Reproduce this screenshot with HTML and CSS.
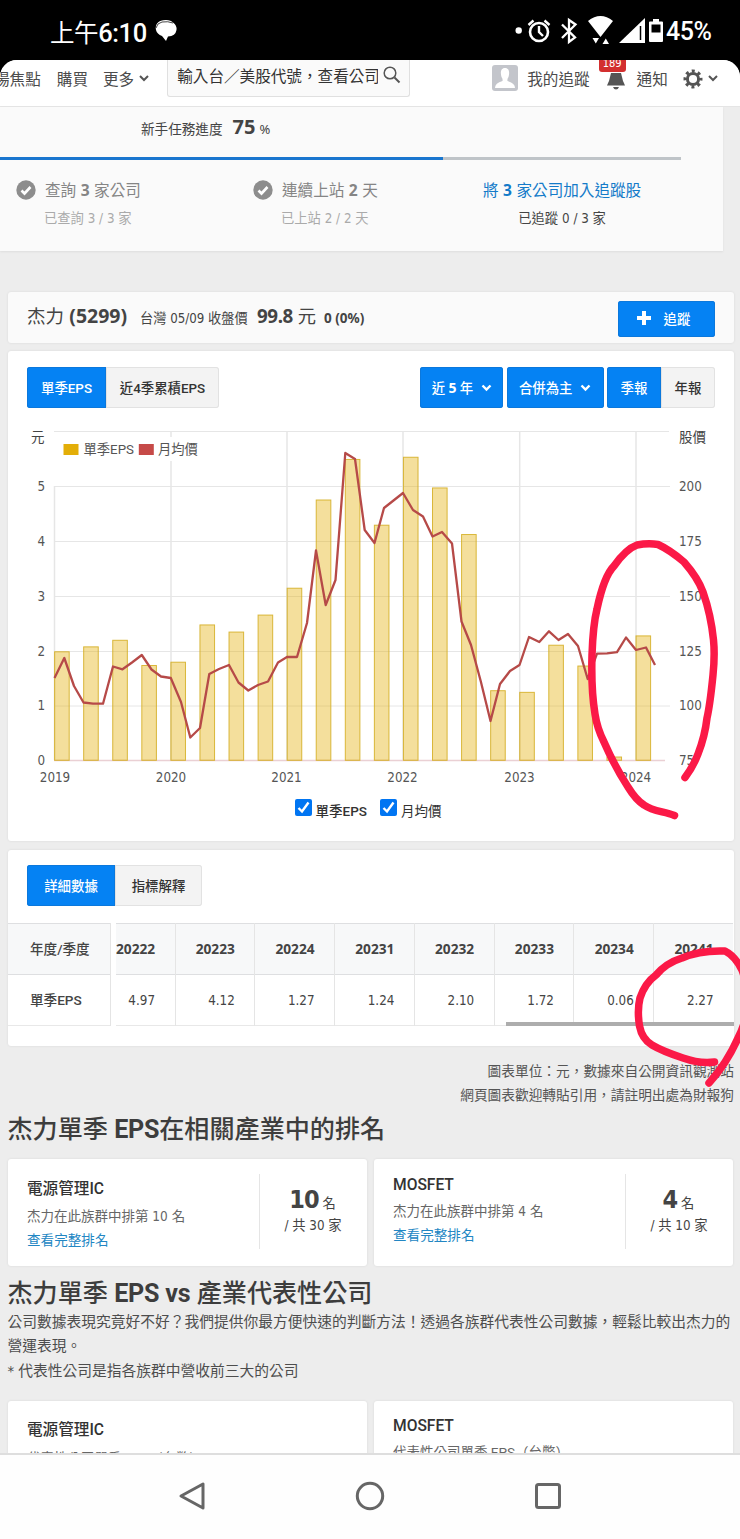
FILE: index.html
```
<!DOCTYPE html>
<html lang="zh-Hant">
<head>
<meta charset="utf-8">
<title>杰力 (5299) 單季EPS</title>
<link rel="stylesheet" href="styles.css">
</head>
<body>
<div class="phone">
  <header class="status">
    <span class="clock">上午<b>6:10</b></span>
    <svg class="chat" width="24" height="24" viewBox="0 0 24 24"><path fill="#fff" d="M4 3.500Q6 1 12 1Q17 1 19 3.500Q23 6 22.500 11Q21.500 17 14 17.500L12 22L8 17Q3 15 2 11Q1 6 4 3.500Z"/><path fill="none" stroke="#444" stroke-width="1" d="M2 9Q3 4 8 3Q14 2 19 4"/></svg>
    <svg class="signals" width="154" height="34" viewBox="512 14 154 34" fill="none" stroke="#fff">
      <circle cx="518.700" cy="29.500" r="3.200" fill="#fff" stroke="none"/>
      <circle cx="539" cy="31" r="9" stroke-width="2.600"/><path stroke-width="2.400" d="M539 25v6l4 4M528.500 24l5-4.500M549.500 24l-5-4.500"/>
      <path stroke-width="2.300" d="M562 23.500l13 13L569 41V19l6.500 4.500L562 37"/>
      <path fill="#fff" stroke="none" d="M588 20Q600.500 10 613 20L600.500 36Z M592.500 37h6.500l-3.200 5.500z M602.500 43h6.500l-3.200-5.500z"/>
      <path fill="#fff" stroke="none" d="M619 42L645 17V42Z"/><path stroke="#000" stroke-width="1.500" d="M640.500 25V39"/>
      <path fill="#fff" stroke="none" fill-rule="evenodd" d="M653 18h6v2.500h3q1 0 1 1V40q0 1-1 1h-12q-1 0-1-1V21.500q0-1 1-1h3z M651.500 23.500v8h9v-8z"/>
    </svg>
    <span class="pct">45%</span>
  </header>

  <main class="page">
    <nav class="nav">
      <span class="link focus">場焦點</span><span class="link buy">購買</span><span class="link">更多</span>
      <svg class="chev" width="10" height="7" viewBox="0 0 10 7"><path d="M1 1l4 4 4-4"/></svg>
      <div class="search"><span>輸入台／美股代號，查看公司</span>
        <svg width="18" height="18" viewBox="0 0 18 18" fill="none" stroke="#555" stroke-width="1.500"><circle cx="7" cy="7" r="5.800"/><path stroke-width="2" d="M11.500 11.500L16.500 16.500"/></svg></div>
      <svg class="avatar" width="26" height="26" viewBox="0 0 26 26"><rect width="26" height="26" rx="3" fill="#c3c5cb"/><path fill="#fff" d="M13 3C8 3 8.500 9 9.500 12Q11 14 10.500 16Q3 18 3 23H23Q23 18 15.500 16Q15 14 16.500 12C17.500 9 18 3 13 3Z"/></svg>
      <span class="link mine">我的追蹤</span>
      <span class="bell"><svg width="20" height="18" viewBox="0 0 20 18"><path fill="#555" d="M5 1H15L17 9Q18 11 19 13.500H1Q2 11 3 9ZM7 15h6q-1 2.500-3 2.500t-3-2.500z"/></svg><b class="badge">189</b></span>
      <span class="link">通知</span>
      <svg class="gear" width="20" height="20" viewBox="-10 -10 20 20" stroke="#555" fill="none"><circle r="5.600" stroke-width="3"/><circle r="8" stroke-width="3" stroke-dasharray="3 3.283" stroke-dashoffset="1.500"/></svg>
      <svg class="chev last" width="10" height="7" viewBox="0 0 10 7"><path d="M1 1l4 4 4-4"/></svg>
    </nav>

    <section class="tasks">
      <div class="progress-label"><span>新手任務進度</span><b>75</b><small>%</small></div>
      <div class="track"><div class="fill"></div></div>
      <div class="steps">
        <div class="step s1"><svg width="20" height="20" viewBox="0 0 20 20"><circle cx="10" cy="10" r="9.700" fill="#8d8d8d"/><path d="M5.500 10.500l3 3 6-6.500" fill="none" stroke="#fff" stroke-width="2.600"/></svg><div><h4>查詢 <b>3</b> 家公司</h4><p>已查詢 3 / 3 家</p></div></div>
        <div class="step s2"><svg width="20" height="20" viewBox="0 0 20 20"><circle cx="10" cy="10" r="9.700" fill="#8d8d8d"/><path d="M5.500 10.500l3 3 6-6.500" fill="none" stroke="#fff" stroke-width="2.600"/></svg><div><h4>連續上站 <b>2</b> 天</h4><p>已上站 2 / 2 天</p></div></div>
        <div class="step s3"><div><h4>將 <b>3</b> 家公司加入追蹤股</h4><p>已追蹤 0 / 3 家</p></div></div>
      </div>
    </section>

    <section class="card stock">
      <h1>杰力 <b>(5299)</b></h1><span class="date">台灣 05/09 收盤價</span><span class="price"><b>99.8</b> 元</span><b class="change">0 (0%)</b>
      <button class="btn follow"><svg width="16" height="16" viewBox="0 0 16 16"><path d="M8 1V15M1 8H15" stroke="#fff" stroke-width="4"/></svg>追蹤</button>
    </section>

    <section class="card chart-card">
      <div class="toolbar">
        <div class="group"><button class="btn on w79">單季EPS</button><button class="btn off w113">近4季累積EPS</button></div>
        <div class="group right">
          <button class="btn solo w83"><span>近 <b>5</b> 年</span><svg width="11" height="8" viewBox="0 0 11 8"><path d="M1.500 1.500l4 4 4-4"/></svg></button>
          <button class="btn solo w97">合併為主<svg width="11" height="8" viewBox="0 0 11 8"><path d="M1.500 1.500l4 4 4-4"/></svg></button>
          <div class="group"><button class="btn on w54">季報</button><button class="btn off w53">年報</button></div>
        </div>
      </div>
      <svg class="chart" id="chart" width="724" height="370" viewBox="9 420 724 370">
        <g class="grid"><path d="M54 431.500H669M54 486.500H670M54 541.500H670M54 596.500H670M54 651.500H670M54 706H670"/><path stroke-width="1.500" d="M54.500 486V760M171 431V760M287 431V760M403 431V760M519.700 431V760M636 431V760"/></g>
        <rect x="60" y="437" width="142" height="24" fill="#fff"/>
        <rect x="63.500" y="444" width="15" height="11" fill="#e3ae08"/><rect x="138.800" y="444" width="15" height="11" fill="#c64a48"/>
        <text class="leg" x="83.500" y="454">單季EPS</text><text class="leg" x="158" y="454">月均價</text>
        <path d="M54 760.500H665" stroke="#ead0d4" stroke-width="1.500"/>
        <g class="bars" id="bars"></g>
        <path class="avg" d="M54.500 678L64.300 658L74 686L83.500 702.500L93 703.700H103L113 666.500L122.500 669.300L132 662.500L141.800 655L151.500 669.500L161 676.500L170.800 678L181 702L190.300 737.500L200 728L209.300 674L219 669L229 665L238.500 682.500L248.300 690.500L258 685L268 681.500L278 662.500L287 657H297L307 623L316 550.500L325.700 605L335.500 580L345.300 453L355 459L364.700 530L374.500 543L384 508L393.500 500.500L403 493L413 510L423 516.500L432.500 536.500L442 532L452 543.500L461.500 621.500L471 645L480.700 681L490.500 721L500 684L510 671L519.500 665L529 637L539.300 642L549 631.300L558.500 640L568 634L578 646L587.700 679L597 653.700L607 653.300L617 652.200L626 637.500L636 650L646 647.500L655 665"/>
        <g class="axis"><text class="unit" x="31" y="441.500">元</text><text class="unit" x="679" y="441.500">股價</text>
          <g text-anchor="end"><text x="45" y="491">5</text><text x="45" y="546">4</text><text x="45" y="600.500">3</text><text x="45" y="655.500">2</text><text x="45" y="710">1</text><text x="45" y="765">0</text></g>
          <text x="679" y="491">200</text><text x="679" y="546">175</text><text x="679" y="600.500">150</text><text x="679" y="655.500">125</text><text x="679" y="710">100</text><text x="679" y="765">75</text>
          <g text-anchor="middle"><text x="55" y="782">2019</text><text x="171" y="782">2020</text><text x="286.500" y="782">2021</text><text x="402.500" y="782">2022</text><text x="519.500" y="782">2023</text><text x="636" y="782">2024</text></g></g>
      </svg>
      <div class="checks">
        <label><svg width="17" height="17" viewBox="0 0 17 17"><rect width="17" height="17" rx="2" fill="#0075f2"/><path d="M3.500 9l3.500 3.500 6.500-9" fill="none" stroke="#fff" stroke-width="2.400"/></svg><span class="med">單季EPS</span></label>
        <label><svg width="17" height="17" viewBox="0 0 17 17"><rect width="17" height="17" rx="2" fill="#0075f2"/><path d="M3.500 9l3.500 3.500 6.500-9" fill="none" stroke="#fff" stroke-width="2.400"/></svg><span>月均價</span></label>
      </div>
    </section>

    <section class="card data-card">
      <div class="group"><button class="btn on w88">詳細數據</button><button class="btn off w87">指標解釋</button></div>
      <div class="table">
        <div class="heads"><span class="th">年度/季度</span><span class="th">單季EPS</span></div>
        <div class="cols">
          <div class="col first"><b>20222</b><span>4.97</span></div><div class="col"><b>20223</b><span>4.12</span></div><div class="col"><b>20224</b><span>1.27</span></div><div class="col"><b>20231</b><span>1.24</span></div><div class="col"><b>20232</b><span>2.10</span></div><div class="col"><b>20233</b><span>1.72</span></div><div class="col"><b>20234</b><span>0.06</span></div><div class="col"><b>20241</b><span>2.27</span></div>
          <i class="scroll"></i>
        </div>
      </div>
    </section>

    <p class="source">圖表單位：元，數據來自公開資訊觀測站<br>網頁圖表歡迎轉貼引用，請註明出處為財報狗</p>

    <h2>杰力單季 <b>EPS</b>在相關產業中的排名</h2>
    <div class="pair">
      <article class="card rank">
        <div class="info"><h3>電源管理IC</h3><p>杰力在此族群中排第 10 名</p><a>查看完整排名</a></div>
        <div class="place"><div><b>10</b> 名</div><div>/ 共 30 家</div></div>
      </article>
      <article class="card rank second">
        <div class="info"><h3>MOSFET</h3><p>杰力在此族群中排第 4 名</p><a>查看完整排名</a></div>
        <div class="place"><div><b>4</b> 名</div><div>/ 共 10 家</div></div>
      </article>
    </div>
    <h2 class="vs">杰力單季 <b>EPS vs</b> 產業代表性公司</h2>
    <p class="desc">公司數據表現究竟好不好？我們提供你最方便快速的判斷方法！透過各族群代表性公司數據，輕鬆比較出杰力的<br>營運表現。<br>* 代表性公司是指各族群中營收前三大的公司</p>
    <div class="pair lower">
      <article class="card compare"><h3>電源管理IC</h3><p>代表性公司單季 EPS（台幣）</p></article>
      <article class="card compare second"><h3>MOSFET</h3><p>代表性公司單季 EPS（台幣）</p></article>
    </div>
  </main>

  <footer class="keys">
    <svg width="28" height="30" viewBox="0 0 28 30"><path d="M25 3V27L3 15Z"/></svg>
    <svg width="30" height="30" viewBox="0 0 30 30"><circle cx="15" cy="15" r="12.700"/></svg>
    <svg width="28" height="28" viewBox="0 0 28 28"><rect x="2.500" y="2.500" width="23" height="23" rx="2"/></svg>
  </footer>

  <svg class="marker" width="740" height="1539" viewBox="0 0 740 1539">
    <path d="M674.500 815.500C664 811 654 812 644 805Q636 800 628 787Q615 767 604 742Q597 728 595 714Q591 690 592 655Q593 625 597 609Q604 576 614 566Q626 549 637 545Q648 543 658 544.500Q670 550 684 562Q698 578 703 592Q711 615 713.500 640Q715 655 713 675Q710 705 707 718Q705 736 698 754Q693 767 685 777.500"/>
    <path d="M714.500 1062Q700 1064 683 1058Q662 1051 652 1045Q642 1039 639.500 1026Q637 1010 640 998Q645 983 656 975Q666 963 682 958Q700 950 725 951Q735 956 742 970Q755 1005 738 1038Q727 1063 709 1083"/>
  </svg>
</div>
<script src="chart.js"></script>
</body>
</html>
```

FILE: chart.js
```
// Quarterly EPS bars: one every 29.07 px, 54.8 px per unit.
const eps = [1.98, 2.07, 2.19, 1.73, 1.79, 2.47, 2.34, 2.65, 3.14, 4.75, 5.49, 4.29, 5.53, 4.97, 4.12, 1.27, 1.24, 2.10, 1.72, 0.06, 2.27];
const bars = document.getElementById('bars');
eps.forEach((v, i) => {
  const r = document.createElementNS('http://www.w3.org/2000/svg', 'rect');
  const h = v * 54.8;
  r.setAttribute('x', 54.6 + i * 29.07);
  r.setAttribute('y', 760.3 - h);
  r.setAttribute('width', 14.6);
  r.setAttribute('height', h);
  bars.appendChild(r);
});
```

FILE: styles.css
```
* { box-sizing: border-box; margin: 0; padding: 0; }
body { font-family: "DejaVu Sans Condensed", "Noto Sans CJK TC", sans-serif; color: #444; background: #000; }
h1, h2, h3, h4 { font-weight: 400; }
svg { display: block; flex: none; }
.phone { position: relative; width: 740px; height: 1539px; overflow: hidden; display: flex; flex-direction: column; }
.status { height: 60px; display: flex; align-items: center; padding: 3px 0 0 50px; color: #fff; font-family: Roboto, "Noto Sans CJK TC", sans-serif; font-size: 25px; font-weight: 500; flex: none; white-space: nowrap; }
.clock { width: 96px; font-weight: 400; font-size: 24.500px; letter-spacing: -.4px; }
.clock b { font-weight: 500; font-size: 25.500px; }
.chat { margin: -2px 0 0 8px; }
.signals { margin-left: 334px; }
.pct { letter-spacing: -.4px; }
.page { height: 1393px; background: #ededed; border-radius: 17px 17px 0 0; overflow: hidden; flex: none; }
.nav { height: 47px; background: #fff; border-bottom: 1px solid #e5e5e5; display: flex; align-items: flex-start; color: #4c4c4c; white-space: nowrap; font-size: 15.6px; line-height: 24px; }
.link { margin-top: 8px; }
.focus { margin: 8px 16px 0 -6px; }
.buy { margin-right: 15px; }
.chev { margin: 15px 18px 0 5px; fill: none; stroke: #555; stroke-width: 2; }
.search { width: 243px; height: 37px; background: #fafafa; border: 1px solid #e0e0e0; border-top: 0; border-radius: 0 0 3px 3px; display: flex; padding: 5px 7px 0 9px; gap: 5px; color: #333; }
.search span { width: 201px; overflow: hidden; }
.search svg { margin-top: 1px; }
.avatar { margin: 5px 9px 0 82px; }
.bell { position: relative; margin: 12px 11px 0 16px; }
.badge { position: absolute; left: -7px; top: -16px; width: 27px; height: 16px; border-radius: 3px; background: #d32f2f; color: #fff; font-size: 11px; line-height: 15px; text-align: center; font-weight: 400; }
.gear { margin: 9px 0 0 15px; }
.last { margin-left: 5px; margin-right: 0; }
.tasks { width: 723px; height: 144px; background: #fafafa; box-shadow: 0 1px 2px #ddd; white-space: nowrap; }
.tasks b, .stock b, .col b { font-family: "Noto Sans", sans-serif; }
.progress-label { height: 50px; padding: 7px 0 0 141px; display: flex; align-items: baseline; font-size: 13.6px; line-height: 26px; }
.progress-label b { font-size: 20px; margin: 0 4px 0 10px; }
.progress-label small { font: 13px "Noto Sans", sans-serif; }
.track { width: 681px; height: 3px; background: #bfc4c8; }
.fill { width: 443px; height: 3px; background: #1976cf; }
.steps { display: flex; padding-top: 18px; }
.step { display: flex; gap: 9px; }
.step svg { margin-top: 2px; }
.s1 { width: 237px; margin-left: 16px; }
.s2 { width: 230px; color: #888; }
.s1 h4, .s2 h4 { color: #858585; }
.s1 p, .s2 p { color: #aaa; margin-left: -1px; }
.s3 h4 { color: #147bc9; }
.s3 p { text-align: center; }
.step h4 { font-size: 15.6px; line-height: 24px; }
.step h4 b { font-size: 15.6px; }
.step p { font-size: 13.3px; line-height: 20px; margin-top: 6px; }
.card { background: #fff; border-radius: 3px; box-shadow: 0 0 2px #d4d4d4; margin-left: 8px; width: 726px; }
.stock { height: 51px; margin-top: 41px; background: #fafafa; display: flex; align-items: baseline; padding: 11px 19px 0; line-height: 26px; white-space: nowrap; }
.stock h1 { font-size: 18.5px; width: 113px; }
.stock h1 b { font-size: 19.500px; }
.date { font-size: 13.2px; width: 117px; }
.price { font-size: 18.3px; width: 67px; letter-spacing: -.3px; }
.price b { font-size: 18.800px; letter-spacing: -.4px; }
.change { font-size: 13.500px; }
.btn { border: 0; background: #0582f3; color: #fff; font: 500 13.4px/41px Roboto, "Noto Sans CJK TC", sans-serif; height: 41px; box-shadow: inset 0 0 0 1px #0b78dc; display: flex; align-items: center; justify-content: center; white-space: nowrap; padding-top: 1px; }
.on { border-radius: 3px 0 0 3px; }
.off { background: #f3f3f3; color: #333; border-radius: 0 3px 3px 0; box-shadow: inset 0 0 0 1px #e2e2e2; }
.follow { height: 36px; width: 97px; margin: -2px 0 0 auto; border-radius: 3px; gap: 12px; line-height: 35px; align-self: flex-start; padding: 0 7px 0 0; }
.follow svg { margin-top: -2px; }
.solo { border-radius: 3px; gap: 8px; }
.solo b { font: 700 14px "Noto Sans", sans-serif; line-height: 20px; }
.solo svg { fill: none; stroke: #fff; stroke-width: 2.400; }
.w79 { width: 79px; } .w113 { width: 113px; } .w83 { width: 83px; } .w97 { width: 97px; } .w54 { width: 54px; } .w53 { width: 54px; } .w88 { width: 88px; } .w87 { width: 87px; }
.group { display: flex; }
.right { gap: 3.300px; }
.chart-card { height: 490px; margin-top: 8px; padding-top: 16px; }
.toolbar { display: flex; justify-content: space-between; padding: 0 19px; height: 53px; }
.chart { margin-left: 1px; }
.chart text { fill: #555; font-size: 13.3px; font-family: "DejaVu Sans Condensed", "Noto Sans CJK TC", sans-serif; }
.chart .leg { font-family: Roboto, "Noto Sans CJK TC", sans-serif; font-size: 13.3px; }
.chart .unit { font-size: 13.5px; fill: #444; }
.grid { fill: none; stroke: #e6e6e6; }
.bars { fill: #e3ae08; fill-opacity: .4; stroke: #d3ad20; stroke-opacity: .85; }
.avg { fill: none; stroke: #b64a48; stroke-width: 2.300; stroke-linejoin: round; }
.checks { display: flex; justify-content: center; gap: 13px; padding: 9px 6px 0 0; color: #333; }
.checks svg { margin-top: -.5px; }
.checks label { display: flex; gap: 4px; font: 13.5px/24px Roboto, "Noto Sans CJK TC", sans-serif; }
.med { font-weight: 500; }
.data-card { height: 196px; margin-top: 9px; padding-top: 15px; }
.data-card > .group { padding-left: 19px; height: 58px; }
.data-card .btn { padding-top: 2px; }
.table { display: flex; }
.heads { width: 103px; border-right: 1px solid #e4e4e4; margin-right: 5px; flex: none; }
.th { display: block; height: 51px; padding-left: 22px; font: 500 13.6px/51px Roboto, "Noto Sans CJK TC", sans-serif; border-bottom: 1px solid #e8e8e8; white-space: nowrap; }
.th:first-child { height: 52px; background: #f7f8f9; border-top: 1px solid #dedfe1; border-bottom-color: #dedfe1; }
.cols { position: relative; display: flex; width: 618px; overflow: hidden; flex: none; }
.col { width: 79.8px; flex: none; text-align: right; border-left: 1px solid #e5e5e5; font-size: 13.3px; line-height: 51px; }
.first { width: 58.500px; border-left: 0; }
.col b, .col span { display: block; padding-right: 19.500px; height: 51px; border-bottom: 1px solid #e8e8e8; }
.col b { height: 52px; font-size: 13.7px; line-height: 50px; background: #f7f8f9; border-top: 1px solid #dedfe1; border-bottom-color: #dedfe1; }
.scroll { position: absolute; right: 0; bottom: 0; width: 228px; height: 4px; background: #adadad; }
.source { margin: 13px 6px 0 0; height: 49px; text-align: right; font-size: 13.7px; line-height: 24px; color: #555; white-space: nowrap; }
h2, h3 { font-family: Roboto, "Noto Sans CJK TC", sans-serif; font-weight: 500; }
h2 { margin: 4px 0 0 7.500px; height: 47px; line-height: 36px; font-size: 25.1px; white-space: nowrap; color: #3d3d3d; }
h2 b { font-weight: 700; letter-spacing: -.2px; }
.pair { display: flex; gap: 7px; padding-left: 8px; }
.pair .card { margin-left: 0; width: 359px; }
.rank { height: 107px; display: flex; }
.info { width: 251px; padding: 18px 0 0 19px; white-space: nowrap; font-size: 13.6px; line-height: 24px; }
.info h3 { margin-bottom: 3px; }
.info p { color: #666; font-size: 13.5px; }
.info a { color: #2286c3; display: block; }
.second .info { padding-top: 14px; }
.second .info h3 { margin-bottom: 2px; }
h3 { font-size: 15.6px; line-height: 24px; color: #333; }
.place { flex: 1; height: 75px; margin-top: 15px; border-left: 1px solid #e5e5e5; text-align: center; font-size: 13.3px; line-height: 24px; padding-top: 11px; white-space: nowrap; }
.place b { font-size: 25px; letter-spacing: -1px; }
.place div:first-child { height: 29px; line-height: 29px; padding-right: 2px; }
.place div + div { margin-top: 3px; height: 22px; line-height: 18px; padding-right: 1px; }
h2.vs { margin-top: 10px; height: 36px; }
.desc { margin: -2px 0 0 7.500px; height: 91px; font-size: 14.750px; line-height: 24.300px; white-space: nowrap; color: #4d4d4d; }
.compare { height: 120px; padding: 17px 0 0 19px; }
.compare p { font: 13.5px/24px Roboto, "Noto Sans CJK TC", sans-serif; margin-top: 4px; color: #666; white-space: nowrap; }
.compare.second { padding-top: 13px; }
.compare.second p { margin-top: 2px; }
.keys { height: 86px; background: #fefefe; border-top: 2px solid #dedede; display: flex; align-items: center; padding: 0 0 2px 178px; flex: none; fill: none; stroke: #666; stroke-width: 3; stroke-linejoin: round; }
.keys svg + svg { margin-left: 149px; }
.marker { position: absolute; left: 0; top: 0; fill: none; stroke: #fb1947; stroke-width: 7.500; stroke-linecap: round; stroke-linejoin: round; }
```
